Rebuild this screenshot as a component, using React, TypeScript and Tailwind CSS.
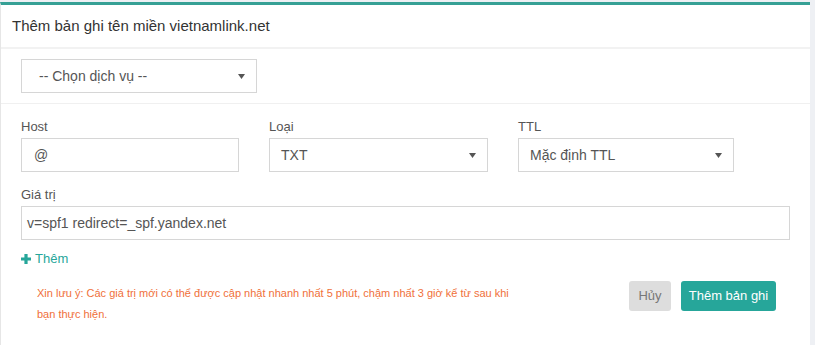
import React from "react";

const Caret = () => (
  <svg width="7" height="5" viewBox="0 0 7 5" className="shrink-0">
    <path d="M0 0h7L3.5 5z" fill="#555" />
  </svg>
);

const FakeSelect = ({ value, className }: { value: string; className: string }) => (
  <div
    className={`flex items-center justify-between h-[34px] border border-[#d6d6d6] bg-white pl-[11px] pr-[11px] text-[14px] text-[#555] ${className}`}
  >
    <span>{value}</span>
    <Caret />
  </div>
);

const Field = ({ label, children }: { label: string; children: React.ReactNode }) => (
  <div className="flex flex-col">
    <label className="text-[13px] text-[#555] leading-[18px] mb-[2px]">{label}</label>
    {children}
  </div>
);

export default function App() {
  return (
    <div
      className="flex w-[815px] h-[345px] bg-[#eef0f4] overflow-hidden pt-[2px]"
      style={{ fontFamily: '"Liberation Sans", Arial, sans-serif' }}
    >
      <div className="w-[810px] shrink-0 bg-white border-t-[3px] border-t-[#36a095] border-l border-l-[#e6e6e6]">
        {/* header */}
        <div className="h-[44px] flex items-center px-[11px] border-b-2 border-[#f2f2f2]">
          <h3 className="text-[15px] text-[#333]">Thêm bản ghi tên miền vietnamlink.net</h3>
        </div>

        {/* service select */}
        <div className="pt-[10px] pb-[10px] px-[20px] border-b border-[#f0f0f0]">
          <FakeSelect value="-- Chọn dịch vụ --" className="w-[236px] pl-[17px]" />
        </div>

        {/* record fields */}
        <div className="px-[20px] pt-[14px]">
          <div className="flex gap-[30px]">
            <Field label="Host">
              <div className="h-[34px] w-[218px] border border-[#d6d6d6] flex items-center pl-[12px] text-[14px] text-[#555]">
                @
              </div>
            </Field>
            <Field label="Loại">
              <FakeSelect value="TXT" className="w-[219px]" />
            </Field>
            <Field label="TTL">
              <FakeSelect value="Mặc định TTL" className="w-[216px]" />
            </Field>
          </div>

          <div className="mt-[14px]">
            <Field label="Giá trị">
              <div className="h-[34px] w-[769px] border border-[#d6d6d6] flex items-center pl-[5px] text-[14px] text-[#555]">
                v=spf1 redirect=_spf.yandex.net
              </div>
            </Field>
          </div>

          <div className="mt-[10px] h-[18px] flex items-center gap-[4px] text-[13px] text-[#26a69a]">
            <svg width="10" height="10" viewBox="0 0 10 10">
              <path d="M3.4 0h3.2v3.4H10v3.2H6.6V10H3.4V6.6H0V3.4h3.4z" fill="#26a69a" />
            </svg>
            <span>Thêm</span>
          </div>

          <div className="flex justify-between mt-[13px]">
            <p className="pl-[16px] pt-[2px] w-[500px] text-[11px] leading-[21px] text-[#f0703a]">
              Xin lưu ý: Các giá trị mới có thể được cập nhật nhanh nhất 5 phút, chậm nhất 3 giờ kể từ sau khi
              bạn thực hiện.
            </p>
            <div className="flex gap-[10px] pr-[14px]">
              <button className="h-[30px] w-[42px] rounded-[3px] bg-[#dddddd] text-[13px] text-[#777]">Hủy</button>
              <button className="h-[30px] w-[95px] rounded-[3px] bg-[#26a69a] text-[13px] text-white">
                Thêm bản ghi
              </button>
            </div>
          </div>
        </div>
      </div>
    </div>
  );
}
